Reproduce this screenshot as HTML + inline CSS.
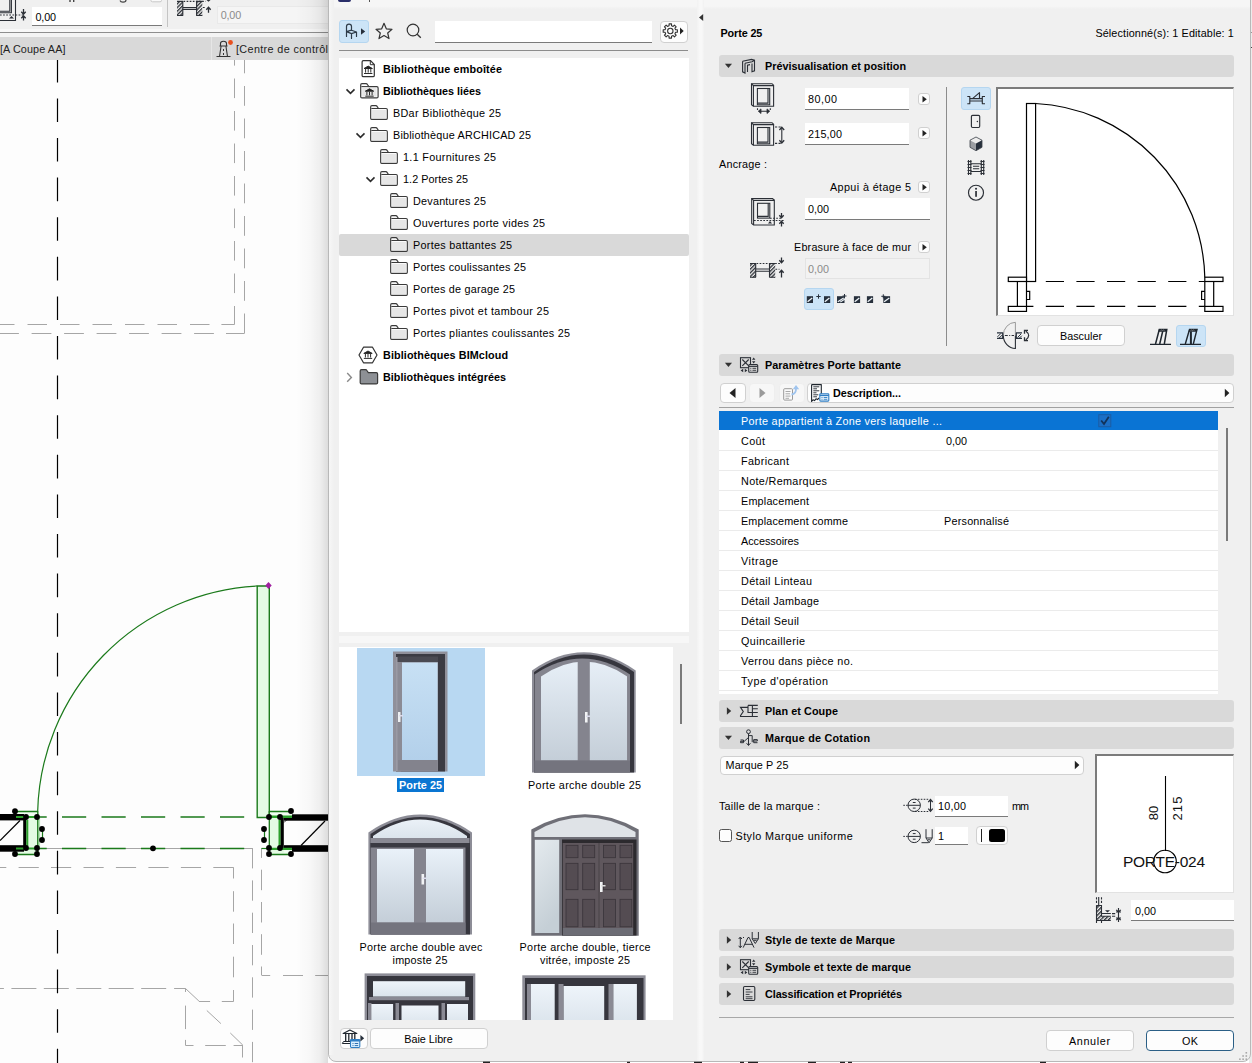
<!DOCTYPE html>
<html><head><meta charset="utf-8">
<style>
*{box-sizing:border-box;margin:0;padding:0}
html,body{width:1252px;height:1063px;overflow:hidden;background:#fff}
body{position:relative;font-family:"Liberation Sans",sans-serif;font-size:12px;color:#000}
.abs{position:absolute}
.t{position:absolute;white-space:nowrap;line-height:16px;height:16px;font-size:10.8px;letter-spacing:0.2px;color:#000}
.b{font-weight:bold}
#bg{position:absolute;left:0;top:0;width:340px;height:1063px;background:#fdfdfd;overflow:hidden}
#dlg{position:absolute;left:328px;top:-10px;width:922.500px;height:1072px;background:#f0f0f0;border:1px solid #b8b8b8;border-radius:8px}
.sec{position:absolute;left:719px;width:515.400px;height:22px;background:#d9d9d9;border-radius:3px}
.inp{position:absolute;background:#fff;border-bottom:1px solid #7a7a7a;height:22px}
.btn{position:absolute;background:#fdfdfd;border:1px solid #d0d0d0;border-radius:4px}
.white{position:absolute;background:#fff}
/*SECTION-CSS*/
</style></head><body>
<!--BG-->
<div id="bg">
<div class="abs" style="left:0;top:0;width:340px;height:32px;background:#f0f0f0"></div>
<div class="abs" style="left:0;top:28.500px;width:340px;height:4px;background:#f8f8f8"></div><div class="abs" style="left:0;top:32.200px;width:340px;height:1.100px;background:#8e8e8e"></div>
<div class="abs" style="left:0;top:33.300px;width:340px;height:4.200px;background:#f4f4f4"></div>
<div class="abs" style="left:0;top:37.400px;width:340px;height:22.400px;background:#d9d9d9"></div>
<div class="abs" style="left:211px;top:37px;width:1px;height:23px;background:#e6e6e6"></div>
<div class="inp" style="left:32px;top:7px;width:130px;height:19px"></div>
<div class="t" style="top:9px;font-size:10.8px;letter-spacing:-0.172px;color:#000;left:35.5px;">0,00</div>

<div class="abs" style="left:167px;top:0;width:1px;height:27px;background:#c4c4c4"></div>
<div class="abs" style="left:217px;top:6px;width:120px;height:17.500px;background:#f5f5f5;border:1px solid #e9e9e9"></div>
<div class="t" style="top:6.800000000000001px;font-size:10.8px;letter-spacing:-0.172px;color:#8a8a8a;left:220.7px;">0,00</div>

<div class="t" style="top:41px;font-size:10.8px;letter-spacing:0.115px;color:#222;left:0px;">[A Coupe AA]</div>

<div class="t" style="top:41px;font-size:10.8px;letter-spacing:0.363px;color:#222;left:236px;">[Centre de contrôl</div>

<svg class="abs" style="left:0;top:0" width="340" height="1063" viewBox="0 0 340 1063">
<!-- toolbar icons -->
<g fill="none" stroke="#2b2f36" stroke-width="1.100">
<path d="M0 11.300H9.800V0M0 12.800H11.400V0M15.500 0V20.500H0"/>
<path d="M0 15H23" stroke-dasharray="1.700 1.400"/>
<path d="M23.500 9V14M21.300 11.800L23.500 14.200L25.700 11.800M23.500 20.500V16M21.300 18.200L23.500 15.800L25.700 18.200" stroke-width="1.300"/>
</g>
<path d="M9 18.600L11.500 15.900L14 18.600Z" fill="#2b2f36"/>
<defs><pattern id="hz0" width="2.600" height="2.600" patternUnits="userSpaceOnUse" patternTransform="rotate(-45)"><rect width="2.600" height="1.300" fill="#2b2f36"/></pattern></defs>
<rect x="177" y="1.200" width="6" height="14.500" fill="url(#hz0)"/><rect x="196.300" y="1.200" width="6" height="14.500" fill="url(#hz0)"/>
<g fill="none" stroke="#2b2f36" stroke-width="1.100">
<path d="M177 1.400H183M177 15.500H183M196.300 1.400H202.300M196.300 15.500H202.300M182.800 1.200V15.700M196.600 1.200V15.700M182.800 7.600H196.600M182.800 9.500H196.600"/>
<path d="M183.500 1.400H205.500M203 7.500H205.500" stroke-dasharray="1.700 1.400"/>
<path d="M208.500 12.700V7.500M206.300 9.800L208.500 7.300L210.700 9.800" stroke-width="1.300"/>
</g>
<path d="M206.500 0H210.500L208.500 1.800Z" fill="#2b2f36"/>
<!-- cropped text bits at top -->
<g fill="#444"><rect x="69.300" y="0" width="1.400" height="2"/><rect x="73" y="0" width="1.400" height="2"/></g>
<path d="M120 0.500Q120.500 2.200 123 2.200Q126 2.200 126 0" fill="none" stroke="#444" stroke-width="1.200"/>
<path d="M151 0V0.500Q151 1.800 152.500 1.800H160Q161.500 1.800 161.500 0.500V0" fill="#fafafa" stroke="#c8c8c8" stroke-width="1"/>
<!-- lighthouse -->
<g fill="none" stroke="#333" stroke-width="1.1">
<path d="M219.500 56.500l1.600-10.500h4.800l1.600 10.500M216.500 56.500h14M219.500 46h8M220.500 46v-2.500c0-3 6-3 6 0v2.500"/>
<path d="M223.500 49v2M223.500 53v2" stroke-width="1"/>
</g>
<circle cx="230.500" cy="42.500" r="2.400" fill="#e8501e"/>
<path d="M234.5 60.0V65.6M234.5 78.5V98.1M234.5 111.0V130.6M234.5 143.5V163.1M234.5 176.0V195.6M234.5 208.5V228.1M234.5 241.0V260.6M234.5 273.5V293.1M234.5 306.0V324.5M0.0 324.5H14.5M27.5 324.5H47.0M60.0 324.5H79.5M92.5 324.5H112.0M125.0 324.5H144.5M157.5 324.5H177.0M190.0 324.5H209.5M221.4 324.5H234.5M244.5 60.0V73.3M244.5 86.0V105.8M244.5 118.5V138.3M244.5 151.0V170.8M244.5 183.5V203.3M244.5 216.0V235.8M244.5 248.5V268.3M244.5 281.0V300.8M244.5 313.5V333.3M0.0 333.5H18.9M31.6 333.5H51.4M64.1 333.5H83.9M96.6 333.5H116.4M129.1 333.5H148.9M161.6 333.5H181.4M194.1 333.5H213.9M226.0 333.5H244.5M46 848.500H252.500M252.5 848.1V868.4M252.5 880.4V900.7M252.5 912.7V933.0M252.5 945.0V965.3M252.5 977.3V997.6M252.5 1009.6V1029.9M252.5 1041.9V1062.2M261.5 848.2V857.9M261.5 869.7V890.2M261.5 902.0V922.5M261.5 934.2V954.8M261.5 966.5V975.0M261.5 975.5H270.2M283.0 975.5H303.0M315.2 975.5H335.0M0.0 867.5H6.3M18.6 867.5H38.8M51.0 867.5H71.2M83.5 867.5H103.7M115.9 867.5H136.1M148.4 867.5H168.6M180.9 867.5H201.1M213.3 867.5H233.5M233.5 867.3V878.5M233.5 891.2V911.7M233.5 923.5V944.0M233.5 956.7V977.3M233.5 990.0V1001.5M221.8 1001.5H233.6M199.0 1001.5H210.1M0.0 988.5H3.9M11.4 988.5H36.4M43.8 988.5H68.8M76.3 988.5H101.3M108.7 988.5H133.7M141.2 988.5H166.2M174.1 988.5H185.7M185.6 988.6L198.950 1001.100M206.800 1010.500L220.900 1023.600M230.300 1033L242.800 1045.100M185.5 988.6V992.0M185.5 1005.6V1029.1M185.5 1039.9V1045.5M185.6 1045.5H193.5M205.2 1045.5H225.8M233.6 1045.5H242.8M242.5 1045.1V1057.5" fill="none" stroke="#a6a6a6" stroke-width="1"/><path d="M57.5 60.0V82.4M57.5 98.4V122.0M57.5 138.0V161.6M57.5 177.6V201.2M57.5 217.2V240.8M57.5 256.8V280.4M57.5 296.4V320.0M57.5 336.0V359.6M57.5 375.6V399.2M57.5 415.2V438.8M57.5 454.8V478.4M57.5 494.4V518.0M57.5 534.0V557.6M57.5 573.6V597.2M57.5 613.2V636.8M57.5 652.8V676.4M57.5 692.4V716.0M57.5 732.0V755.6M57.5 771.6V795.2M57.5 811.2V834.8M57.5 850.8V874.4M57.5 890.4V914.0M57.5 930.0V953.6M57.5 969.6V993.2M57.5 1009.2V1032.8M57.5 1048.8V1063.0" fill="none" stroke="#000" stroke-width="1.200"/>
<!-- door leaf & arc -->
<g fill="none" stroke="#1b7a1b" stroke-width="1.200">
<path d="M257.200 586A231.300 231.300 0 0 0 37.700 811V854"/>
<rect x="257.200" y="586" width="12.100" height="231" fill="#e3fbe3" stroke="none"/>
<path d="M257.200 817.500V586H269.300V817.500Z" stroke-width="1.400"/>
</g>
<!-- green dashed sill lines -->
<g fill="none" stroke="#1b7a1b" stroke-width="1.300">
<path d="M22.500 817H245" stroke-dasharray="24.200 15.300"/>
<path d="M22.500 848.500H245" stroke-dasharray="24.200 15.300"/>

</g>
<!-- left jamb -->
<g>
<rect x="27" y="818" width="11" height="30" fill="#e3fbe3"/>
<rect x="16" y="849" width="22" height="5" fill="#e3fbe3"/>
<rect x="16" y="811.500" width="22" height="5" fill="#f1fdf1"/>
<rect x="0" y="814" width="24" height="6.400" fill="#000"/>
<rect x="0" y="845.200" width="24" height="6.500" fill="#000"/>
<rect x="23.200" y="816" width="3.200" height="34" fill="#000"/>
<path d="M0 840.500L20 820.500" stroke="#000" stroke-width="1.200" fill="none"/>
<path d="M27.300 820V846" stroke="#2ca02c" stroke-width="2"/>
<path d="M16 817H38M16 848.500H38" stroke="#2ca02c" stroke-width="2"/>
<path d="M15 811.500H38M15 854.500H38" stroke="#1b7a1b" stroke-width="1.300" fill="none"/>
<path d="M39.300 818V848" stroke="#b5e8b5" stroke-width="1.600"/><path d="M37.700 811V854" stroke="#1b7a1b" stroke-width="1.200"/>
<path d="M42.500 829V840" stroke="#1b7a1b" stroke-width="1.200"/>
<g fill="#000">
<circle cx="15" cy="811.200" r="2.900"/><circle cx="26" cy="817" r="2.900"/><circle cx="37" cy="817" r="2.900"/>
<circle cx="42" cy="829" r="2.900"/><circle cx="42" cy="840" r="2.900"/>
<circle cx="26" cy="848" r="2.900"/><circle cx="37" cy="848" r="2.900"/>
<circle cx="15" cy="854" r="2.900"/><circle cx="37" cy="854" r="2.900"/>
</g>
</g>
<!-- right jamb -->
<g>
<rect x="269.500" y="818" width="10" height="30" fill="#e3fbe3"/>
<rect x="269.500" y="849" width="21" height="5" fill="#e3fbe3"/>
<rect x="269.500" y="811.500" width="21" height="5" fill="#f1fdf1"/>
<rect x="284" y="814.300" width="56" height="6.400" fill="#000"/>
<rect x="284" y="845.200" width="56" height="6.600" fill="#000"/>
<rect x="280.300" y="816" width="3.500" height="34" fill="#000"/>
<path d="M301 845.500L325 821" stroke="#000" stroke-width="1.200" fill="none"/>
<path d="M284 822.500l2.500-2.500" stroke="#000" stroke-width="0.800"/>
<path d="M279.500 820V846" stroke="#2ca02c" stroke-width="2"/>
<rect x="284" y="813.500" width="8" height="2.500" fill="#f1fdf1"/><rect x="284" y="850" width="8" height="2.500" fill="#f1fdf1"/><path d="M269 816.700H292M269 848.900H292" stroke="#2ca02c" stroke-width="2.400"/>
<path d="M269.300 811.500H291M269.300 854.500H291M269.300 811V854" stroke="#1b7a1b" stroke-width="1.300" fill="none"/>
<path d="M264.500 829V840" stroke="#1b7a1b" stroke-width="1.200"/>
<path d="M261.500 848.500H269" stroke="#1b7a1b" stroke-width="1.200"/>
<g fill="#000">
<circle cx="291" cy="811" r="2.900"/><circle cx="269" cy="817" r="2.900"/><circle cx="280" cy="817" r="2.900"/>
<circle cx="264" cy="829" r="2.900"/><circle cx="264" cy="840" r="2.900"/>
<circle cx="269" cy="848" r="2.900"/><circle cx="280" cy="848" r="2.900"/>
<circle cx="269" cy="854" r="2.900"/><circle cx="291" cy="854" r="2.900"/>
</g>
</g>
<circle cx="153" cy="848.300" r="2.900" fill="#000"/>
<path d="M268.500 582l3.200 3.500-3.200 3.500-3.200-3.500z" fill="#a020a0"/>

</svg>
</div>

<!--RIGHTSTRIP--><div class="abs" style="left:1249px;top:0;width:3px;height:1063px;background:#ececec"></div><div class="abs" style="left:1250px;top:32px;width:2px;height:1px;background:#999"></div><div class="abs" style="left:1250px;top:46.500px;width:2px;height:1.500px;background:#444"></div>
<!--SHADOW-->
<div class="abs" style="left:296px;top:0;width:32px;height:1063px;background:linear-gradient(to right,rgba(0,0,0,0),rgba(0,0,0,0.025) 45%,rgba(0,0,0,0.06) 75%,rgba(0,0,0,0.13))"></div>
<div id="dlg"></div>
<div class="abs" style="left:329px;top:0;width:921px;height:9px;background:linear-gradient(#f6f6f6,#f6f6f6 70%,#f0f0f0)"></div><div class="abs" style="left:329px;top:0;width:5px;height:1055px;background:linear-gradient(to right,#f7f7f7,#f0f0f0)"></div><div class="abs" style="left:338px;top:0;width:13px;height:1.500px;background:#2a2f6a;border-radius:0 0 3px 3px"></div><div class="abs" style="left:369px;top:0;width:1px;height:2px;background:#555"></div>
<div class="abs" style="left:339px;top:20px;width:30px;height:23px;background:#cce4f7;border:1px solid #b5d6f0;border-radius:3px"></div>
<svg class="abs" style="left:339px;top:20px" width="30" height="23" viewBox="339 20 30 23"><path d="M346.500 36.500V26.500Q346.500 24.200 349 24.200Q351.500 24.200 351.500 26.500V30.300M346.500 31.600L351.500 30.200L356.500 32L351.500 33.600ZM351.500 33.600V38.500M356.500 32V36.500" fill="none" stroke="#2e3b48" stroke-width="1.200" stroke-linecap="round" stroke-linejoin="round"/><path d="M361 28.300L365.200 31.500L361 34.700Z" fill="#27303c"/></svg>
<svg class="abs" style="left:374px;top:21px" width="20" height="20" viewBox="0 0 20 20"><path d="M10 2.300L12.300 7.800L18 8.300L13.700 12L15 17.600L10 14.600L5 17.600L6.300 12L2 8.300L7.700 7.800Z" fill="none" stroke="#333" stroke-width="1.200" stroke-linejoin="round"/></svg>
<svg class="abs" style="left:404px;top:21px" width="20" height="20" viewBox="0 0 20 20"><circle cx="9" cy="9" r="5.800" fill="none" stroke="#333" stroke-width="1.200"/><path d="M13.200 13.200L16.800 16.800" stroke="#333" stroke-width="1.300"/></svg>
<div class="inp" style="left:435px;top:21px;width:217px;height:22px"></div>
<div class="btn" style="left:660px;top:21px;width:28px;height:22px"></div>
<svg class="abs" style="left:659.800px;top:21.300px" width="28" height="20" viewBox="0 0 28 20"><g transform="translate(10.300 10)"><path d="M7.10 -1.22L7.10 1.22L5.26 1.23L4.59 2.85L5.88 4.16L4.16 5.88L2.85 4.59L1.23 5.26L1.22 7.10L-1.22 7.10L-1.23 5.26L-2.85 4.59L-4.16 5.88L-5.88 4.16L-4.59 2.85L-5.26 1.23L-7.10 1.22L-7.10 -1.22L-5.26 -1.23L-4.59 -2.85L-5.88 -4.16L-4.16 -5.88L-2.85 -4.59L-1.23 -5.26L-1.22 -7.10L1.22 -7.10L1.23 -5.26L2.85 -4.59L4.16 -5.88L5.88 -4.16L4.59 -2.85L5.26 -1.23Z" fill="none" stroke="#333" stroke-width="1.100" stroke-linejoin="round"/><circle r="2.700" fill="none" stroke="#333" stroke-width="1.100"/></g><path d="M20 6.500L23.700 10L20 13.500Z" fill="#222"/></svg>
<div class="abs" style="left:339px;top:50px;width:349px;height:1px;background:#8c8c8c"></div>
<div class="white" style="left:339px;top:58px;width:350px;height:574px"></div>
<div class="abs" style="left:339px;top:234px;width:350px;height:22px;background:#d9d9d9;border-radius:2px"></div>
<svg class="abs" style="left:361px;top:59px" width="15" height="19" viewBox="0 0 15 19"><path d="M2.400 1.700H9.500L13.300 5.500V16.400Q13.300 17.700 12 17.700H2.400Q1.100 17.700 1.100 16.400V3Q1.100 1.700 2.400 1.700Z" fill="#fff" stroke="#333" stroke-width="1.200"/><path d="M9.300 1.900V5.700H13.100" fill="none" stroke="#333" stroke-width="1"/><path d="M3 9.5l4.200-2.400 4.200 2.400z M3 14.5h8.400 M4.6 10.0v3.600 M7.2 10.0v3.600 M9.8 10.0v3.600" fill="#222" stroke="#222" stroke-width="0.950" stroke-linejoin="round"/></svg>
<div class="t" style="top:61px;font-size:10.8px;letter-spacing:0.161px;color:#000;left:383px;font-weight:bold;">Bibliothèque emboîtée</div>
<svg class="abs" style="left:345px;top:88px" width="11" height="7" viewBox="0 0 11 7"><path d="M1.500 1.400L5.500 5.300L9.500 1.400" fill="none" stroke="#2b2b2b" stroke-width="1.600"/></svg>
<svg class="abs" style="left:360px;top:83px" width="19" height="16" viewBox="0 0 19 16"><path d="M0.700 13.700V2Q0.700 0.700 2 0.700H6Q7 0.700 7.600 1.700L8.800 3.600H16.800Q18.100 3.600 18.100 4.900V13.700Q18.100 14.900 16.800 14.900H2Q0.700 14.900 0.700 13.700Z" fill="#fff" stroke="#3a3a3a" stroke-width="1.200"/><path d="M1.400 3.600H8.500" stroke="#3a3a3a" stroke-width="1.100"/><rect x="2.200" y="5" width="14.400" height="8.600" fill="#e6e6e6"/><path d="M5.3 8.2l4.200-2.400 4.200 2.400z M5.3 13.2h8.400 M6.9 8.7v3.600 M9.5 8.7v3.600 M12.1 8.7v3.600" fill="#222" stroke="#222" stroke-width="0.950" stroke-linejoin="round"/></svg>
<div class="t" style="top:83px;font-size:10.8px;letter-spacing:-0.023px;color:#000;left:383px;font-weight:bold;">Bibliothèques liées</div>
<svg class="abs" style="left:369.5px;top:104.5px" width="18.200" height="15.500" viewBox="0 0 19 16" preserveAspectRatio="none"><path d="M0.700 13.700V2Q0.700 0.700 2 0.700H6Q7 0.700 7.600 1.700L8.800 3.600H16.800Q18.100 3.600 18.100 4.900V13.700Q18.100 14.900 16.800 14.900H2Q0.700 14.900 0.700 13.700Z" fill="#fff" stroke="#3a3a3a" stroke-width="1.200"/><path d="M1.400 3.600H8.500" stroke="#3a3a3a" stroke-width="1.100"/><rect x="2.200" y="5" width="14.400" height="8.600" fill="#e6e6e6"/></svg>
<div class="t" style="top:105px;font-size:10.8px;letter-spacing:0.313px;color:#000;left:393px;">BDar Bibliothèque 25</div>
<svg class="abs" style="left:369.5px;top:126.5px" width="18.200" height="15.500" viewBox="0 0 19 16" preserveAspectRatio="none"><path d="M0.700 13.700V2Q0.700 0.700 2 0.700H6Q7 0.700 7.600 1.700L8.800 3.600H16.800Q18.100 3.600 18.100 4.900V13.700Q18.100 14.900 16.800 14.900H2Q0.700 14.900 0.700 13.700Z" fill="#fff" stroke="#3a3a3a" stroke-width="1.200"/><path d="M1.400 3.600H8.500" stroke="#3a3a3a" stroke-width="1.100"/><rect x="2.200" y="5" width="14.400" height="8.600" fill="#e6e6e6"/></svg>
<svg class="abs" style="left:355px;top:132px" width="11" height="7" viewBox="0 0 11 7"><path d="M1.500 1.400L5.500 5.300L9.500 1.400" fill="none" stroke="#2b2b2b" stroke-width="1.600"/></svg>
<div class="t" style="top:127px;font-size:10.8px;letter-spacing:0.207px;color:#000;left:393px;">Bibliothèque ARCHICAD 25</div>
<svg class="abs" style="left:379.5px;top:148.5px" width="18.200" height="15.500" viewBox="0 0 19 16" preserveAspectRatio="none"><path d="M0.700 13.700V2Q0.700 0.700 2 0.700H6Q7 0.700 7.600 1.700L8.800 3.600H16.800Q18.100 3.600 18.100 4.900V13.700Q18.100 14.900 16.800 14.900H2Q0.700 14.900 0.700 13.700Z" fill="#fff" stroke="#3a3a3a" stroke-width="1.200"/><path d="M1.400 3.600H8.500" stroke="#3a3a3a" stroke-width="1.100"/><rect x="2.200" y="5" width="14.400" height="8.600" fill="#e6e6e6"/></svg>
<div class="t" style="top:149px;font-size:10.8px;letter-spacing:0.316px;color:#000;left:403px;">1.1 Fournitures 25</div>
<svg class="abs" style="left:379.5px;top:170.5px" width="18.200" height="15.500" viewBox="0 0 19 16" preserveAspectRatio="none"><path d="M0.700 13.700V2Q0.700 0.700 2 0.700H6Q7 0.700 7.600 1.700L8.800 3.600H16.800Q18.100 3.600 18.100 4.900V13.700Q18.100 14.900 16.800 14.900H2Q0.700 14.900 0.700 13.700Z" fill="#fff" stroke="#3a3a3a" stroke-width="1.200"/><path d="M1.400 3.600H8.500" stroke="#3a3a3a" stroke-width="1.100"/><rect x="2.200" y="5" width="14.400" height="8.600" fill="#e6e6e6"/></svg>
<svg class="abs" style="left:365px;top:176px" width="11" height="7" viewBox="0 0 11 7"><path d="M1.500 1.400L5.500 5.300L9.500 1.400" fill="none" stroke="#2b2b2b" stroke-width="1.600"/></svg>
<div class="t" style="top:171px;font-size:10.8px;letter-spacing:0.064px;color:#000;left:403px;">1.2 Portes 25</div>
<svg class="abs" style="left:389.5px;top:192.5px" width="18.200" height="15.500" viewBox="0 0 19 16" preserveAspectRatio="none"><path d="M0.700 13.700V2Q0.700 0.700 2 0.700H6Q7 0.700 7.600 1.700L8.800 3.600H16.800Q18.100 3.600 18.100 4.900V13.700Q18.100 14.900 16.800 14.900H2Q0.700 14.900 0.700 13.700Z" fill="#fff" stroke="#3a3a3a" stroke-width="1.200"/><path d="M1.400 3.600H8.500" stroke="#3a3a3a" stroke-width="1.100"/><rect x="2.200" y="5" width="14.400" height="8.600" fill="#e6e6e6"/></svg>
<div class="t" style="top:193px;font-size:10.8px;letter-spacing:0.230px;color:#000;left:413px;">Devantures 25</div>
<svg class="abs" style="left:389.5px;top:214.5px" width="18.200" height="15.500" viewBox="0 0 19 16" preserveAspectRatio="none"><path d="M0.700 13.700V2Q0.700 0.700 2 0.700H6Q7 0.700 7.600 1.700L8.800 3.600H16.800Q18.100 3.600 18.100 4.900V13.700Q18.100 14.900 16.800 14.900H2Q0.700 14.900 0.700 13.700Z" fill="#fff" stroke="#3a3a3a" stroke-width="1.200"/><path d="M1.400 3.600H8.500" stroke="#3a3a3a" stroke-width="1.100"/><rect x="2.200" y="5" width="14.400" height="8.600" fill="#e6e6e6"/></svg>
<div class="t" style="top:215px;font-size:10.8px;letter-spacing:0.324px;color:#000;left:413px;">Ouvertures porte vides 25</div>
<svg class="abs" style="left:389.5px;top:236.5px" width="18.200" height="15.500" viewBox="0 0 19 16" preserveAspectRatio="none"><path d="M0.700 13.700V2Q0.700 0.700 2 0.700H6Q7 0.700 7.600 1.700L8.800 3.600H16.800Q18.100 3.600 18.100 4.900V13.700Q18.100 14.900 16.800 14.900H2Q0.700 14.900 0.700 13.700Z" fill="#fff" stroke="#3a3a3a" stroke-width="1.200"/><path d="M1.400 3.600H8.500" stroke="#3a3a3a" stroke-width="1.100"/><rect x="2.200" y="5" width="14.400" height="8.600" fill="#e6e6e6"/></svg>
<div class="t" style="top:237px;font-size:10.8px;letter-spacing:0.298px;color:#000;left:413px;">Portes battantes 25</div>
<svg class="abs" style="left:389.5px;top:258.5px" width="18.200" height="15.500" viewBox="0 0 19 16" preserveAspectRatio="none"><path d="M0.700 13.700V2Q0.700 0.700 2 0.700H6Q7 0.700 7.600 1.700L8.800 3.600H16.800Q18.100 3.600 18.100 4.900V13.700Q18.100 14.900 16.800 14.900H2Q0.700 14.900 0.700 13.700Z" fill="#fff" stroke="#3a3a3a" stroke-width="1.200"/><path d="M1.400 3.600H8.500" stroke="#3a3a3a" stroke-width="1.100"/><rect x="2.200" y="5" width="14.400" height="8.600" fill="#e6e6e6"/></svg>
<div class="t" style="top:259px;font-size:10.8px;letter-spacing:0.208px;color:#000;left:413px;">Portes coulissantes 25</div>
<svg class="abs" style="left:389.5px;top:280.5px" width="18.200" height="15.500" viewBox="0 0 19 16" preserveAspectRatio="none"><path d="M0.700 13.700V2Q0.700 0.700 2 0.700H6Q7 0.700 7.600 1.700L8.800 3.600H16.800Q18.100 3.600 18.100 4.900V13.700Q18.100 14.900 16.800 14.900H2Q0.700 14.900 0.700 13.700Z" fill="#fff" stroke="#3a3a3a" stroke-width="1.200"/><path d="M1.400 3.600H8.500" stroke="#3a3a3a" stroke-width="1.100"/><rect x="2.200" y="5" width="14.400" height="8.600" fill="#e6e6e6"/></svg>
<div class="t" style="top:281px;font-size:10.8px;letter-spacing:0.231px;color:#000;left:413px;">Portes de garage 25</div>
<svg class="abs" style="left:389.5px;top:302.5px" width="18.200" height="15.500" viewBox="0 0 19 16" preserveAspectRatio="none"><path d="M0.700 13.700V2Q0.700 0.700 2 0.700H6Q7 0.700 7.600 1.700L8.800 3.600H16.800Q18.100 3.600 18.100 4.900V13.700Q18.100 14.900 16.800 14.900H2Q0.700 14.900 0.700 13.700Z" fill="#fff" stroke="#3a3a3a" stroke-width="1.200"/><path d="M1.400 3.600H8.500" stroke="#3a3a3a" stroke-width="1.100"/><rect x="2.200" y="5" width="14.400" height="8.600" fill="#e6e6e6"/></svg>
<div class="t" style="top:303px;font-size:10.8px;letter-spacing:0.374px;color:#000;left:413px;">Portes pivot et tambour 25</div>
<svg class="abs" style="left:389.5px;top:324.5px" width="18.200" height="15.500" viewBox="0 0 19 16" preserveAspectRatio="none"><path d="M0.700 13.700V2Q0.700 0.700 2 0.700H6Q7 0.700 7.600 1.700L8.800 3.600H16.800Q18.100 3.600 18.100 4.900V13.700Q18.100 14.900 16.800 14.900H2Q0.700 14.900 0.700 13.700Z" fill="#fff" stroke="#3a3a3a" stroke-width="1.200"/><path d="M1.400 3.600H8.500" stroke="#3a3a3a" stroke-width="1.100"/><rect x="2.200" y="5" width="14.400" height="8.600" fill="#e6e6e6"/></svg>
<div class="t" style="top:325px;font-size:10.8px;letter-spacing:0.272px;color:#000;left:413px;">Portes pliantes coulissantes 25</div>
<svg class="abs" style="left:358px;top:346px" width="20" height="18" viewBox="0 0 20 18"><path d="M5.500 1.200H14.500L19 9L14.500 16.800H5.500L1 9Z" fill="#fff" stroke="#333" stroke-width="1.200" stroke-linejoin="round"/><path d="M5.8 7.4l4.200-2.400 4.200 2.400z M5.8 12.4h8.400 M7.4 7.9v3.600 M10.0 7.9v3.600 M12.6 7.9v3.600" fill="#222" stroke="#222" stroke-width="0.950" stroke-linejoin="round"/></svg>
<div class="t" style="top:347px;font-size:10.8px;letter-spacing:0.097px;color:#000;left:383px;font-weight:bold;">Bibliothèques BIMcloud</div>
<svg class="abs" style="left:346px;top:372px" width="7" height="11" viewBox="0 0 7 11"><path d="M1.200 1L5.400 5.400L1.200 9.800" fill="none" stroke="#8a8a8a" stroke-width="1.400"/></svg>
<svg class="abs" style="left:359px;top:369px" width="20" height="16" viewBox="0 0 19 16"><path d="M0.700 13.700V2Q0.700 0.700 2 0.700H6Q7 0.700 7.600 1.700L8.800 3.600H16.800Q18.100 3.600 18.100 4.900V13.700Q18.100 14.900 16.800 14.900H2Q0.700 14.900 0.700 13.700Z" fill="#8d9095" stroke="#3a3a3a" stroke-width="1.200"/></svg>
<div class="t" style="top:369px;font-size:10.8px;letter-spacing:0.028px;color:#000;left:383px;font-weight:bold;">Bibliothèques intégrées</div>
<div class="white" style="left:339px;top:647px;width:334px;height:373px;overflow:hidden">
<svg class="abs" style="left:0;top:0" width="334" height="373" viewBox="339 647 334 373">
<defs>
<linearGradient id="gl" x1="0" y1="0" x2="0" y2="1"><stop offset="0" stop-color="#e9f1f9"/><stop offset="0.5" stop-color="#d6dfe8"/><stop offset="1" stop-color="#c4ced8"/></linearGradient>
<linearGradient id="gl2" x1="0" y1="0" x2="0" y2="1"><stop offset="0" stop-color="#c7e0f4"/><stop offset="1" stop-color="#b3d0ea"/></linearGradient>
<linearGradient id="gl3" x1="0" y1="0" x2="0.3" y2="1"><stop offset="0" stop-color="#e4eaee"/><stop offset="1" stop-color="#c5cfd6"/></linearGradient>
<linearGradient id="gl4" x1="0" y1="0" x2="0" y2="1"><stop offset="0" stop-color="#eef4fa"/><stop offset="1" stop-color="#dbe4ec"/></linearGradient>
</defs>
<rect x="357" y="648" width="128" height="128" fill="#b8d8f2"/>
<rect x="393" y="651.500" width="54.500" height="120" fill="#90909a"/>
<rect x="396" y="654" width="49" height="117.500" fill="#3b3b43"/>
<rect x="396" y="657" width="5" height="114.500" fill="#9a9aa4"/>
<rect x="397.500" y="661.500" width="40.500" height="110" fill="#8b8b95"/>
<rect x="397.500" y="656.500" width="40.500" height="5.500" fill="#4a4a52"/>
<rect x="402" y="662.500" width="35.600" height="97.500" fill="url(#gl2)"/>
<rect x="398" y="760" width="39.500" height="10.500" fill="#83838d"/>
<rect x="398" y="712" width="2.500" height="10" fill="#eef0f2"/><rect x="399" y="715" width="4" height="1.500" fill="#dde"/>
<path d="M532 772.4V670.5Q583.85 634.0999999999999 635.7 670.5V772.4Z" fill="#8d8d97"/>
<path d="M534 772.4V672Q584.0 637.0 634 672V772.4Z" fill="#36363e"/>
<path d="M534.5 772.4V674.5Q582.25 642.5 630 674.5V772.4Z" fill="#84848e"/>
<clipPath id="c2"><path d="M541 760.4V676.5Q584.1 646.5 627.2 676.5V760.4Z"/></clipPath>
<g clip-path="url(#c2)"><rect x="541" y="655" width="36.700" height="106" fill="url(#gl)"/><rect x="589.800" y="655" width="37.400" height="106" fill="url(#gl)"/></g>
<rect x="534.500" y="760.400" width="95.500" height="12" fill="#74747e"/>
<rect x="585" y="712" width="2.600" height="10.500" fill="#f2f3f5"/><rect x="586" y="715.500" width="4" height="1.500" fill="#dde"/>
<path d="M368.4 934.4V832.5Q420.2 796.7 472 832.5V934.4Z" fill="#8d8d97"/>
<path d="M370.5 934.4V834Q420.25 800 470 834V934.4Z" fill="#36363e"/>
<clipPath id="c3"><path d="M373 838V836Q420.0 803.0 467 836V838Z"/></clipPath>
<g clip-path="url(#c3)"><rect x="373" y="815" width="94" height="23" fill="url(#gl4)"/></g>
<rect x="370.500" y="838" width="99" height="5" fill="#8a8a94"/>
<rect x="370.500" y="843" width="99" height="4.500" fill="#3a3a42"/>
<rect x="371" y="847.500" width="94.500" height="87" fill="#84848e"/>
<rect x="377" y="849" width="37" height="73.500" fill="url(#gl)"/><rect x="426" y="849" width="37.200" height="73.500" fill="url(#gl)"/>
<rect x="371" y="922.500" width="94.500" height="12" fill="#74747e"/>
<rect x="421.500" y="874" width="2.600" height="10.500" fill="#f2f3f5"/><rect x="422.500" y="877.500" width="4" height="1.500" fill="#dde"/>
<path d="M531.3 935.8V829.5Q585.0 799.0999999999999 638.7 829.5V935.8Z" fill="#6f6f77"/>
<clipPath id="c4"><path d="M534.5 837V832Q585.0 802.5999999999999 635.5 832V837Z"/></clipPath>
<g clip-path="url(#c4)"><rect x="534" y="815" width="102" height="22" fill="#dfe3e7"/></g>
<rect x="534.800" y="839.800" width="24.400" height="93.200" fill="url(#gl3)"/>
<rect x="562" y="839.500" width="74.500" height="96" fill="#2c2a2e"/>
<rect x="562.700" y="843" width="70.500" height="85" fill="#5f575d"/>
<rect x="566" y="845.3" width="12.0" height="12.4" fill="#544c52" stroke="#39343a" stroke-width="0.800"/><rect x="566" y="863.3" width="12.0" height="26.4" fill="#544c52" stroke="#39343a" stroke-width="0.800"/><rect x="566" y="899.3" width="12.0" height="27.5" fill="#544c52" stroke="#39343a" stroke-width="0.800"/><rect x="582.7" y="845.3" width="12.0" height="12.4" fill="#544c52" stroke="#39343a" stroke-width="0.800"/><rect x="582.7" y="863.3" width="12.0" height="26.4" fill="#544c52" stroke="#39343a" stroke-width="0.800"/><rect x="582.7" y="899.3" width="12.0" height="27.5" fill="#544c52" stroke="#39343a" stroke-width="0.800"/><rect x="603.5" y="845.3" width="12.0" height="12.4" fill="#544c52" stroke="#39343a" stroke-width="0.800"/><rect x="603.5" y="863.3" width="12.0" height="26.4" fill="#544c52" stroke="#39343a" stroke-width="0.800"/><rect x="603.5" y="899.3" width="12.0" height="27.5" fill="#544c52" stroke="#39343a" stroke-width="0.800"/><rect x="620" y="845.3" width="11.8" height="12.4" fill="#544c52" stroke="#39343a" stroke-width="0.800"/><rect x="620" y="863.3" width="11.8" height="26.4" fill="#544c52" stroke="#39343a" stroke-width="0.800"/><rect x="620" y="899.3" width="11.8" height="27.5" fill="#544c52" stroke="#39343a" stroke-width="0.800"/>
<rect x="598.500" y="843" width="1" height="85" fill="#4a4449"/>
<rect x="562.700" y="928" width="70.500" height="7.500" fill="#6c6c74"/>
<rect x="600" y="882" width="2.600" height="10" fill="#f2f3f5"/><rect x="601" y="885" width="4.500" height="1.500" fill="#ddd"/>
<rect x="364.600" y="973.400" width="110.700" height="50" fill="#8d8d97"/>
<rect x="367" y="976" width="106" height="47" fill="#36363e"/>
<rect x="373" y="981.200" width="92.200" height="15.400" fill="url(#gl4)"/>
<rect x="369" y="997" width="100" height="3.200" fill="#8a8a94"/>
<rect x="368" y="1003" width="3.500" height="20" fill="#8a8a94"/><rect x="395.500" y="1003" width="3.500" height="20" fill="#8a8a94"/><rect x="441.500" y="1003" width="3.500" height="20" fill="#8a8a94"/>
<rect x="371.300" y="1004" width="21.800" height="20" fill="url(#gl4)"/><rect x="401.500" y="1005.500" width="37" height="20" fill="url(#gl4)"/><rect x="447" y="1004" width="21" height="20" fill="url(#gl4)"/>
<rect x="522.300" y="975.300" width="123.300" height="50" fill="#8d8d97"/>
<rect x="525" y="978" width="118.500" height="47" fill="#36363e"/>
<rect x="527" y="984" width="4" height="40" fill="#8a8a94"/><rect x="558.500" y="984" width="5" height="40" fill="#8a8a94"/><rect x="608.500" y="984" width="5" height="40" fill="#8a8a94"/>
<rect x="531" y="984" width="23.700" height="40" fill="url(#gl4)"/><rect x="563.600" y="986" width="40.600" height="40" fill="url(#gl4)"/><rect x="613.400" y="984" width="23.500" height="40" fill="url(#gl4)"/>
</svg>
</div>
<div class="abs" style="left:397px;top:778px;width:47px;height:14px;background:#0a76d2"></div>
<div class="t" style="top:777px;font-size:10.8px;letter-spacing:0.056px;color:#fff;left:399px;font-weight:bold;">Porte 25</div>
<div class="t" style="top:777px;font-size:10.8px;letter-spacing:0.338px;color:#000;left:528px;">Porte arche double 25</div>
<div class="t" style="top:939.3px;font-size:10.8px;letter-spacing:0.262px;color:#000;left:359.6px;">Porte arche double avec</div>
<div class="t" style="top:952px;font-size:10.8px;letter-spacing:0.241px;color:#000;left:392.5px;">imposte 25</div>
<div class="t" style="top:939.3px;font-size:10.8px;letter-spacing:0.294px;color:#000;left:519.6px;">Porte arche double, tierce</div>
<div class="t" style="top:952px;font-size:10.8px;letter-spacing:0.281px;color:#000;left:540px;">vitrée, imposte 25</div>
<div class="abs" style="left:680px;top:664px;width:2px;height:60px;background:#7a7a7a"></div>
<div class="abs" style="left:339px;top:636px;width:350px;height:6.500px;background:#f7f7f7"></div>
<div class="btn" style="left:340px;top:1028px;width:28px;height:21px"></div>
<svg class="abs" style="left:340px;top:1028px" width="28" height="22" viewBox="340 1028 28 22"><path d="M343.200 1033.500L349.900 1030L356.800 1033.500Z" fill="none" stroke="#1f262e" stroke-width="1.200" stroke-linejoin="round"/><path d="M345.700 1034V1041.200M348.800 1034V1041.200M352 1034V1041.200M354.800 1034V1041.200" stroke="#1f262e" stroke-width="1.300"/><path d="M343.500 1041.500H352L352 1043.500H342.300Z" fill="#fff" stroke="#1f262e" stroke-width="1" stroke-linejoin="round"/><rect x="350.500" y="1039.500" width="9.300" height="8" rx="0.900" fill="#dbf0ff" stroke="#2f7ec4" stroke-width="1.100"/><path d="M350.500 1040.600H359.800" stroke="#2f7ec4" stroke-width="1.800"/><path d="M352.500 1043.500H353.500M354.700 1043.500H358.200M352.500 1045.600H353.500M354.700 1045.600H358.200" stroke="#2f6fae" stroke-width="1"/><path d="M360.400 1035L364.200 1038.300L360.400 1041.600Z" fill="#27303c"/></svg>
<div class="btn" style="left:370px;top:1028px;width:118px;height:21px"></div>
<div class="t" style="top:1031px;font-size:10.8px;letter-spacing:-0.025px;color:#000;left:404.3px;">Baie Libre</div>

<div class="abs" style="left:696.500px;top:0;width:7.500px;height:1061px;background:linear-gradient(to right,#f2f2f2,#f8f8f8 40%,#f8f8f8 70%,#f1f1f1)"></div>
<svg class="abs" style="left:698px;top:12px" width="6" height="10" viewBox="0 0 6 10"><path d="M5.200 2V9L1 5.500Z" fill="#333"/></svg>
<div class="t" style="top:25px;font-size:10.8px;letter-spacing:-0.116px;color:#000;left:720.5px;font-weight:bold;">Porte 25</div>
<div class="t" style="top:25px;font-size:10.8px;letter-spacing:0.123px;color:#000;left:1095.4px;">Sélectionné(s): 1 Editable: 1</div>
<div class="sec" style="top:55px"></div>
<svg class="abs" style="left:723px;top:63px" width="10" height="6" viewBox="0 0 10 6"><path d="M1.900 0.700H9L5.450 5.100Z" fill="#333"/></svg>
<svg class="abs" style="left:740px;top:57px" width="18" height="18" viewBox="740 57 18 18"><g fill="none" stroke="#2b2f36" stroke-width="1.1"><path d="M742.600 61.300V71.800L745 73V63.300M742.600 61.300L751.500 59.400L754.500 60.200V70.800L752 71.800V63.500M745 63.300L752 61.800L754.500 60.200M747.500 72V65.200L750 64.600"/></g></svg>
<div class="t" style="top:58px;font-size:10.8px;letter-spacing:0.022px;color:#000;left:765px;font-weight:bold;">Prévisualisation et position</div>
<svg class="abs" style="left:748px;top:81px" width="40" height="36" viewBox="748 81 40 36"><g fill="none" stroke="#2b2f36" stroke-width="1.1"><path d="M751.5 83.7H772L773.6 85.2V106.2H753.4L751.5 104.7Z"/><path d="M753.4 106.2V85.60000000000001H773.6"/><path d="M751.5 83.7L753.4 85.60000000000001"/><rect x="757.4" y="88.5" width="12.300" height="16.300"/><path d="M768 88.5V103.1H757.4"/></g><g fill="none" stroke="#2b2f36" stroke-width="1.1"><path d="M759 111.200H769M757.500 108.200V110M770.300 108.200V110" /><path d="M761 108.900L758.300 111.200L761 113.500ZM767 108.900L769.700 111.200L767 113.500Z" fill="#2b2f36" stroke-width="0.800"/></g></svg>
<div class="inp" style="left:805px;top:88px;width:104px;height:22px"></div>
<div class="t" style="top:91px;font-size:10.8px;letter-spacing:0.492px;color:#000;left:808px;">80,00</div>
<div class="btn" style="left:917.5px;top:92.7px;width:12.500px;height:12.500px;border-radius:3px;border-color:#d0d0d0"></div><svg class="abs" style="left:917.5px;top:92.7px" width="12.500" height="12.500" viewBox="0 0 12.500 12.500"><path d="M4.500 3V9.600L8.800 6.300Z" fill="#222"/></svg>
<svg class="abs" style="left:748px;top:120px" width="40" height="30" viewBox="748 120 40 30"><g fill="none" stroke="#2b2f36" stroke-width="1.1"><path d="M751.5 122.7H772L773.6 124.2V145.2H753.4L751.5 143.7Z"/><path d="M753.4 145.2V124.60000000000001H773.6"/><path d="M751.5 122.7L753.4 124.60000000000001"/><rect x="757.4" y="127.5" width="12.300" height="16.300"/><path d="M768 127.5V142.1H757.4"/></g><g fill="none" stroke="#2b2f36" stroke-width="1.1"><path d="M775 127H781M775 143.300H781" stroke-dasharray="2.200 1.300" stroke-width="1.200"/><path d="M781.800 128V142.300"/><path d="M779.400 130L781.800 127.300L784.200 130M779.400 140.300L781.800 143L784.200 140.300" stroke-width="1.300"/></g></svg>
<div class="inp" style="left:805px;top:123px;width:104px;height:22px"></div>
<div class="t" style="top:126px;font-size:10.8px;letter-spacing:0.194px;color:#000;left:808px;">215,00</div>
<div class="btn" style="left:917.5px;top:126.7px;width:12.500px;height:12.500px;border-radius:3px;border-color:#d0d0d0"></div><svg class="abs" style="left:917.5px;top:126.7px" width="12.500" height="12.500" viewBox="0 0 12.500 12.500"><path d="M4.500 3V9.600L8.800 6.300Z" fill="#222"/></svg>
<div class="t" style="top:156px;font-size:10.8px;letter-spacing:0.223px;color:#000;left:719px;">Ancrage :</div>
<div class="t" style="top:179px;font-size:10.8px;letter-spacing:0.382px;color:#000;left:830px;">Appui à étage 5</div>
<div class="btn" style="left:917.5px;top:180.7px;width:12.500px;height:12.500px;border-radius:3px;border-color:#d0d0d0"></div><svg class="abs" style="left:917.5px;top:180.7px" width="12.500" height="12.500" viewBox="0 0 12.500 12.500"><path d="M4.500 3V9.600L8.800 6.300Z" fill="#222"/></svg>
<svg class="abs" style="left:748px;top:195px" width="40" height="34" viewBox="748 195 40 34"><g fill="none" stroke="#2b2f36" stroke-width="1.1"><path d="M751.700 198.500H772.500L774.300 200V225H753.600L751.700 223.500Z"/><path d="M753.600 225V200.400H774.300M751.700 198.500L753.600 200.400"/><rect x="757.500" y="203.300" width="12.300" height="14.800"/><path d="M768.200 203.300V216.400H757.500"/></g><g fill="none" stroke="#2b2f36" stroke-width="1.1"><path d="M754 220.500H784.500M770 218.200H782" stroke-dasharray="1.700 1.400"/></g><path d="M768 223.600L770 220.900L772 223.600Z" fill="#2b2f36"/><g fill="none" stroke="#2b2f36" stroke-width="1.1"><path d="M781.500 213V217.500M779.300 215.300L781.500 217.700L783.700 215.300M781.500 226.500V221.500M779.300 223.700L781.500 221.300L783.700 223.700" stroke-width="1.300"/></g></svg>
<div class="inp" style="left:805px;top:198px;width:125px;height:22px"></div>
<div class="t" style="top:201px;font-size:10.8px;letter-spacing:-0.005px;color:#000;left:808px;">0,00</div>
<div class="t" style="top:239px;font-size:10.8px;letter-spacing:0.199px;color:#000;left:794px;">Ebrasure à face de mur</div>
<div class="btn" style="left:917.5px;top:240.7px;width:12.500px;height:12.500px;border-radius:3px;border-color:#d0d0d0"></div><svg class="abs" style="left:917.5px;top:240.7px" width="12.500" height="12.500" viewBox="0 0 12.500 12.500"><path d="M4.500 3V9.600L8.800 6.300Z" fill="#222"/></svg>
<svg class="abs" style="left:748px;top:255px" width="40" height="26" viewBox="748 255 40 26"><defs><pattern id="hz" width="2.600" height="2.600" patternUnits="userSpaceOnUse" patternTransform="rotate(-45)"><rect width="2.600" height="1.300" fill="#2b2f36"/></pattern></defs><rect x="750" y="263.200" width="6" height="14.400" fill="url(#hz)"/><rect x="769.200" y="263.200" width="6" height="14.400" fill="url(#hz)"/><g fill="none" stroke="#2b2f36" stroke-width="1.1"><path d="M750 263.500H756M750 277.300H756M769.200 263.500H775.200M769.200 277.300H775.200M756 269H769.200M756 271.300H769.200M755.700 263.500V277.300M769.500 263.500V277.300"/></g><g fill="none" stroke="#2b2f36" stroke-width="1.1"><path d="M756.500 263.500H780M775.500 269.200H779.500" stroke-dasharray="1.700 1.400"/></g><g fill="none" stroke="#2b2f36" stroke-width="1.1"><path d="M781.500 257.500V262.500M779.300 260.200L781.500 262.700L783.700 260.200M781.500 277.500V270.500M779.300 272.800L781.500 270.300L783.700 272.800" stroke-width="1.300"/></g></svg>
<div class="abs" style="left:805px;top:258px;width:125px;height:21px;background:#f2f2f2;border:1px solid #e3e3e3"></div>
<div class="t" style="top:261px;font-size:10.8px;letter-spacing:-0.005px;color:#8a8a8a;left:808px;">0,00</div>
<div class="abs" style="left:804px;top:288px;width:30px;height:22px;background:#cce4f7;border:1px solid #b5d6f0;border-radius:3px"></div>
<svg class="abs" style="left:804px;top:290px" width="92" height="18" viewBox="804 290 92 18"><rect x="806.8" y="296.2" width="6.2" height="6.8" fill="#27303c"/><path d="M807.5999999999999 301.7L812.2 298.0" stroke="#eef3f8" stroke-width="1.300"/><path d="M816.3 296.5H820.7M818.5 294.3V298.7" stroke="#27303c" stroke-width="1" fill="none"/><rect x="824" y="296.2" width="6.2" height="6.8" fill="#27303c"/><path d="M824.8 301.7L829.4000000000001 298.0" stroke="#eef3f8" stroke-width="1.300"/><rect x="837" y="296.2" width="7.5" height="6.8" fill="#27303c"/><path d="M837.8 301.7L843.7 298.0" stroke="#eef3f8" stroke-width="1.300"/><path d="M840.3 302.0L845.0 299.0" stroke="#eef3f8" stroke-width="1.100"/><path d="M842.5 296H846.5M844.5 294V298" stroke="#27303c" stroke-width="1" fill="none"/><rect x="853.9" y="296.2" width="6.2" height="6.8" fill="#27303c"/><path d="M854.6999999999999 301.7L859.3000000000001 298.0" stroke="#eef3f8" stroke-width="1.300"/><rect x="866.9" y="296.2" width="6.2" height="6.8" fill="#27303c"/><path d="M867.6999999999999 301.7L872.3000000000001 298.0" stroke="#eef3f8" stroke-width="1.300"/><rect x="883.3" y="296.2" width="6.8" height="6.8" fill="#27303c"/><path d="M884.0999999999999 301.7L889.3 298.0" stroke="#eef3f8" stroke-width="1.300"/><path d="M881.3 296.3H885.3M883.3 294.3V298.3" stroke="#27303c" stroke-width="1" fill="none"/></svg>
<div class="abs" style="left:946px;top:87px;width:1px;height:259px;background:#8c8c8c"></div>
<div class="abs" style="left:961px;top:87px;width:30px;height:23px;background:#cce4f7;border:1px solid #b5d6f0;border-radius:3px"></div>
<svg class="abs" style="left:960px;top:86px" width="32" height="118" viewBox="960 86 32 118"><g fill="none" stroke="#2b2f36" stroke-width="1.15"><path d="M967.300 96.500H970.200M967.300 103.700H970.200M969.800 96.500V103.700M982.300 96.500V103.700M981.900 96.500H985M981.900 103.700H985M969.800 98.600H982.300M969.800 101H982.300M972.500 98.600L979.500 92.600V98.600" stroke-linejoin="round"/></g><g fill="none" stroke="#2b2f36" stroke-width="1.15"><rect x="971.400" y="115.400" width="8.300" height="12.100" rx="1.200"/></g><circle cx="977.400" cy="121.600" r="0.750" fill="#2b2f36"/><path d="M976 137L982 140.200L976 143.600L970 140.200Z" fill="#ececec"/><path d="M970 140.200L976 143.600V150.700L970 147.300Z" fill="#9b9ea3"/><path d="M982 140.200L976 143.600V150.700L982 147.300Z" fill="#27303c"/><path d="M976 137L982 140.200V147.300L976 150.700L970 147.300V140.200Z" fill="none" stroke="#3a3f47" stroke-width="0.800"/><g fill="none" stroke="#2b2f36" stroke-width="1.1"><path d="M968.500 160V175M970.800 160V175M981.300 160V175M983.700 160V175M970.800 163.800H981.300M970.800 171.500H981.300M973 166.200H979.200M973 168.800H979.200"/></g><g fill="none" stroke="#2b2f36" stroke-width="1"><path d="M967.500 161.500H971.500M967.500 164.500H971.500M967.500 167.500H971.500M967.500 170.500H971.500M967.500 173.500H971.500M980.500 161.500H984.500M980.500 164.500H984.500M980.500 167.500H984.500M980.500 170.500H984.500M980.500 173.500H984.500"/></g><g fill="none" stroke="#2b2f36" stroke-width="1.15"><circle cx="976" cy="192.700" r="7.500"/></g><rect x="975.200" y="191" width="1.700" height="5.800" fill="#2b2f36"/><circle cx="976.050" cy="188.700" r="1.050" fill="#2b2f36"/></svg>
<div class="abs" style="left:996px;top:87px;width:238px;height:229px;background:#fff;border-top:2px solid #7b7b7b;border-left:2px solid #7b7b7b;border-right:1px solid #e2e2e2;border-bottom:1px solid #e2e2e2"></div>
<svg class="abs" style="left:998px;top:89px" width="236" height="226" viewBox="998 89 236 226"><g fill="none" stroke="#000" stroke-width="1.200"><path d="M1035.600 103.500A178.200 178.200 0 0 1 1204.800 277.500"/><rect x="1026.500" y="103.500" width="9.100" height="178"/><rect x="1008.300" y="277.200" width="18.200" height="4.300" fill="#fff"/><rect x="1008.300" y="306.400" width="18.200" height="5" fill="#fff"/><path d="M1017.400 281.500V306.400M1026.500 281.500V306.400M1026.500 291.400H1029.700V299.500H1026.500"/><rect x="1204.800" y="277.200" width="18.200" height="4.300" fill="#fff"/><rect x="1204.800" y="306.400" width="18.200" height="5" fill="#fff"/><path d="M1213.700 281.500V306.400M1204.800 281.500V306.400M1204.800 291.400H1201.600V299.500H1204.800"/><path d="M1045.800 281.500H1204.800" stroke-dasharray="18.200 12.400"/><path d="M1026.500 306.400H1204.800" stroke-dasharray="18.200 12.400" stroke-dashoffset="11.300"/></g></svg>
<svg class="abs" style="left:995px;top:320px" width="40" height="32" viewBox="995 320 40 32"><path d="M1015.400 322.300A12.300 13.100 0 0 0 1003.300 335.500" fill="none" stroke="#9a9a9a" stroke-width="1"/><path d="M1015.400 322.300V335.500" stroke="#9a9a9a" stroke-width="1"/><path d="M1003.300 335.500A12.300 13.100 0 0 0 1015.400 348.500V335.500" fill="none" stroke="#2b2f36" stroke-width="1.100"/><path d="M1004.800 335.500H1014" stroke="#2b2f36" stroke-width="1" stroke-dasharray="3 1.400 1 1.400"/><path d="M997 332.800H1003.200M997 338.400H1003.200M1002.700 332.800V338.400" stroke="#27303c" stroke-width="1.200" fill="none"/><path d="M997.500 336.800L1001 333.300M999 338.200L1002.500 334.700" stroke="#27303c" stroke-width="1"/><path d="M1016 332.800H1022M1016 338.400H1022M1016.300 332.800V338.400" stroke="#27303c" stroke-width="1.200" fill="none"/><path d="M1017.500 337.500L1021 334M1019.300 338.200L1021.800 335.700" stroke="#27303c" stroke-width="1"/><g fill="none" stroke="#2b2f36" stroke-width="1.2"><path d="M1025.800 331Q1031.500 335.500 1025.800 340"/><path d="M1024.500 333.800V330.300H1028M1024.500 337.200V340.700H1028" stroke-width="1.300"/></g></svg>
<div class="btn" style="left:1037px;top:325px;width:88px;height:21px"></div>
<div class="t" style="top:328px;font-size:10.8px;letter-spacing:-0.002px;color:#000;left:1060px;">Basculer</div>
<div class="abs" style="left:1176px;top:325px;width:30px;height:22px;background:#cce4f7;border:1px solid #b5d6f0;border-radius:3px"></div>
<svg class="abs" style="left:1148px;top:325px" width="58" height="22" viewBox="1148 325 58 22"><path d="M1150 344.400H1171M1180 344.400H1201" stroke="#1f262e" stroke-width="1.300"/><path d="M1155.500 344L1159.300 329.500H1166.800L1164.300 344M1159.700 344L1163 330" fill="none" stroke="#1f262e" stroke-width="1.500"/><path d="M1159 329H1167L1166.500 331.800H1158.400Z" fill="#1f262e"/><path d="M1160.500 330.600l1-0.600 1 0.600 1-0.600 1 0.600" stroke="#ccc" stroke-width="0.500" fill="none"/><path d="M1185.300 344L1189.500 329.500H1197L1193.300 344" fill="none" stroke="#1f262e" stroke-width="1.400"/><path d="M1189.200 329H1197.300L1196.600 331.800H1188.500Z" fill="#1f262e"/><path d="M1190.900 331.500V344" stroke="#1f262e" stroke-width="2"/><path d="M1190.500 330.600l1-0.600 1 0.600 1-0.600 1 0.600" stroke="#ccc" stroke-width="0.500" fill="none"/></svg>
<div class="sec" style="top:354px"></div>
<svg class="abs" style="left:723px;top:362px" width="10" height="6" viewBox="0 0 10 6"><path d="M1.900 0.700H9L5.450 5.100Z" fill="#333"/></svg>
<svg class="abs" style="left:739px;top:356px" width="21" height="18" viewBox="739 356 21 18"><g fill="none" stroke="#2b2f36" stroke-width="1.1"><rect x="740.500" y="357.700" width="10" height="10"/><path d="M742.300 359.500L748.700 365.900M748.700 359.500L742.300 365.900"/></g><path d="M752 359.800L753.700 357.500L755.400 359.800ZM752 361.200L753.700 363.400L755.400 361.200Z" fill="#2b2f36"/><path d="M743.200 368.800L740.600 370.500L743.200 372.200ZM744.800 368.800L747.400 370.500L744.800 372.200Z" fill="#2b2f36"/><rect x="748.700" y="364.500" width="9" height="7.800" rx="1" fill="#d9d9d9" stroke="#2b2f36" stroke-width="1.100"/><path d="M748.700 366.300H757.700" stroke="#2b2f36" stroke-width="1.200"/><path d="M750.300 368.300H751.300M752.500 368.300H756.200M750.300 370.300H751.300M752.500 370.300H756.200" stroke="#2b2f36" stroke-width="0.900"/></svg>
<div class="t" style="top:357px;font-size:10.8px;letter-spacing:0.066px;color:#000;left:765px;font-weight:bold;">Paramètres Porte battante</div>
<div class="btn" style="left:720px;top:383px;width:26px;height:20px"></div>
<svg class="abs" style="left:720px;top:383px" width="26" height="20" viewBox="0 0 26 20"><path d="M15.500 5V15L9.500 10Z" fill="#222"/></svg>
<div class="btn" style="left:749px;top:383px;width:26px;height:20px;background:#f7f7f7;border-color:#eeeeee"></div>
<svg class="abs" style="left:749px;top:383px" width="26" height="20" viewBox="0 0 26 20"><path d="M10.500 5V15L16.500 10Z" fill="#9a9a9a"/></svg>
<div class="btn" style="left:779px;top:383px;width:26px;height:20px;background:#f7f7f7;border-color:#eeeeee"></div>
<svg class="abs" style="left:781px;top:384px" width="22" height="18" viewBox="781 384 22 18"><rect x="783.700" y="388.700" width="8.800" height="11.400" rx="1" fill="#fafafa" stroke="#9a9a9a" stroke-width="1"/><path d="M785.500 391.500H790.500M785.500 393.800H790M785.500 396.100H790.500M785.500 398.300H789" stroke="#a0a0a0" stroke-width="0.900"/><path d="M791.500 394.500Q796.200 394 796 388.500" fill="none" stroke="#9fc4ee" stroke-width="1.800"/><path d="M792.800 389.300L796 385L799.200 389.300Z" fill="#9fc4ee"/></svg>
<div class="btn" style="left:807px;top:383px;width:427px;height:20px"></div>
<svg class="abs" style="left:810px;top:383px" width="22" height="20" viewBox="810 383 22 20"><path d="M811.600 384.600H821.300V395M811.600 384.600V401.500L813 399.800L814.500 400.600L816 398.800L817.500 399.600L819 398" fill="#fff" stroke="#1f262e" stroke-width="1.100" stroke-linejoin="round"/><path d="M813.300 386.800H819.300M813.300 388.800H817M813.300 390.800H819.300M813.300 392.800H816.500M813.300 394.800H818.300M813.300 396.800H817" stroke="#1f262e" stroke-width="0.900"/><rect x="819.800" y="393.800" width="9" height="7.300" rx="0.800" fill="#eaf3fb" stroke="#2f7ec4" stroke-width="1.100"/><path d="M819.800 395.400H828.800" stroke="#2f7ec4" stroke-width="1.400"/><path d="M821.500 397.500H822.500M823.700 397.500H827.300M821.500 399.300H822.500M823.700 399.300H827.300" stroke="#2f7ec4" stroke-width="0.900"/></svg>
<div class="t" style="top:385px;font-size:10.8px;letter-spacing:-0.031px;color:#000;left:833px;font-weight:bold;">Description...</div>
<svg class="abs" style="left:1224px;top:388px" width="6" height="10" viewBox="0 0 6 10"><path d="M0.800 0.800V9.200L5.400 5Z" fill="#222"/></svg>
<div class="abs" style="left:719px;top:407px;width:515px;height:1px;background:#a0a0a0"></div>
<div class="white" style="left:719px;top:411px;width:499px;height:283px"></div>
<div class="abs" style="left:719px;top:411px;width:499px;height:19px;background:#0a74d4"></div>
<div class="t" style="top:413px;font-size:10.8px;letter-spacing:0.298px;color:#fff;left:741px;">Porte appartient à Zone vers laquelle ...</div>
<div class="t" style="top:433px;font-size:10.8px;letter-spacing:0.396px;color:#000;left:741px;">Coût</div>
<div class="abs" style="left:719px;top:450px;width:499px;height:1px;background:#ebebeb"></div>
<div class="t" style="top:453px;font-size:10.8px;letter-spacing:0.373px;color:#000;left:741px;">Fabricant</div>
<div class="abs" style="left:719px;top:470px;width:499px;height:1px;background:#ebebeb"></div>
<div class="t" style="top:473px;font-size:10.8px;letter-spacing:0.337px;color:#000;left:741px;">Note/Remarques</div>
<div class="abs" style="left:719px;top:490px;width:499px;height:1px;background:#ebebeb"></div>
<div class="t" style="top:493px;font-size:10.8px;letter-spacing:0.198px;color:#000;left:741px;">Emplacement</div>
<div class="abs" style="left:719px;top:510px;width:499px;height:1px;background:#ebebeb"></div>
<div class="t" style="top:513px;font-size:10.8px;letter-spacing:0.162px;color:#000;left:741px;">Emplacement comme</div>
<div class="abs" style="left:719px;top:530px;width:499px;height:1px;background:#ebebeb"></div>
<div class="t" style="top:533px;font-size:10.8px;letter-spacing:-0.020px;color:#000;left:741px;">Accessoires</div>
<div class="abs" style="left:719px;top:550px;width:499px;height:1px;background:#ebebeb"></div>
<div class="t" style="top:553px;font-size:10.8px;letter-spacing:0.497px;color:#000;left:741px;">Vitrage</div>
<div class="abs" style="left:719px;top:570px;width:499px;height:1px;background:#ebebeb"></div>
<div class="t" style="top:573px;font-size:10.8px;letter-spacing:0.382px;color:#000;left:741px;">Détail Linteau</div>
<div class="abs" style="left:719px;top:590px;width:499px;height:1px;background:#ebebeb"></div>
<div class="t" style="top:593px;font-size:10.8px;letter-spacing:0.228px;color:#000;left:741px;">Détail Jambage</div>
<div class="abs" style="left:719px;top:610px;width:499px;height:1px;background:#ebebeb"></div>
<div class="t" style="top:613px;font-size:10.8px;letter-spacing:0.307px;color:#000;left:741px;">Détail Seuil</div>
<div class="abs" style="left:719px;top:630px;width:499px;height:1px;background:#ebebeb"></div>
<div class="t" style="top:633px;font-size:10.8px;letter-spacing:0.382px;color:#000;left:741px;">Quincaillerie</div>
<div class="abs" style="left:719px;top:650px;width:499px;height:1px;background:#ebebeb"></div>
<div class="t" style="top:653px;font-size:10.8px;letter-spacing:0.348px;color:#000;left:741px;">Verrou dans pièce no.</div>
<div class="abs" style="left:719px;top:670px;width:499px;height:1px;background:#ebebeb"></div>
<div class="t" style="top:673px;font-size:10.8px;letter-spacing:0.500px;color:#000;left:741px;">Type d'opération</div>
<div class="abs" style="left:719px;top:690px;width:499px;height:1px;background:#ebebeb"></div>
<div class="t" style="top:433px;font-size:10.8px;letter-spacing:-0.005px;color:#000;left:946px;">0,00</div>
<div class="t" style="top:513px;font-size:10.8px;letter-spacing:0.234px;color:#000;left:944px;">Personnalisé</div>
<svg class="abs" style="left:1098px;top:414px" width="14" height="14" viewBox="0 0 14 14"><rect x="0.800" y="0.700" width="12" height="12" fill="#1c6fc6" stroke="#1b5da3" stroke-width="1"/><path d="M3.200 6.500L6 10L10.800 2.800" fill="none" stroke="#12335a" stroke-width="1.800"/></svg>
<div class="abs" style="left:1226px;top:428px;width:2px;height:113px;background:#7a7a7a"></div>
<div class="sec" style="top:700px"></div>
<svg class="abs" style="left:725px;top:706px" width="7" height="10" viewBox="0 0 7 10"><path d="M1.900 1.300V8.700L6.200 5Z" fill="#333"/></svg>
<svg class="abs" style="left:739px;top:703px" width="21" height="16" viewBox="739 703 21 16"><g fill="none" stroke="#2b2f36" stroke-width="1.1"><path d="M748 707.400H740.500L743.300 711.600L740.500 715.600V716.500H757.800M748 705.400V712.500H757.800M748 705.400H757.800M752.400 705.400V716.500M752.400 708.800H757.800"/></g></svg>
<div class="t" style="top:703px;font-size:10.8px;letter-spacing:0.083px;color:#000;left:765px;font-weight:bold;">Plan et Coupe</div>
<div class="sec" style="top:727px"></div>
<svg class="abs" style="left:723px;top:735px" width="10" height="6" viewBox="0 0 10 6"><path d="M1.900 0.700H9L5.450 5.100Z" fill="#333"/></svg>
<svg class="abs" style="left:739px;top:728px" width="21" height="20" viewBox="739 728 21 20"><g fill="none" stroke="#2b2f36" stroke-width="1"><circle cx="748.500" cy="731.700" r="1.900"/><path d="M748.500 733.600V745M746.600 743.200L748.500 745.500L750.400 743.200"/><path d="M740.500 740H743.500V742.700H740.500V741.300H744.200L748.500 737.500M748.500 735.600H752.200V742.200M753.300 741H757.300V739.600H753.700V742.700H757.500"/></g></svg>
<div class="t" style="top:730px;font-size:10.8px;letter-spacing:0.248px;color:#000;left:765px;font-weight:bold;">Marque de Cotation</div>
<div class="btn" style="left:720px;top:756px;width:364px;height:19px"></div>
<div class="t" style="top:757.3px;font-size:10.8px;letter-spacing:0.138px;color:#000;left:725.5px;">Marque P 25</div>
<svg class="abs" style="left:1074px;top:760px" width="6" height="10" viewBox="0 0 6 10"><path d="M0.800 0.800V9.200L5.400 5Z" fill="#222"/></svg>
<div class="abs" style="left:1095px;top:754px;width:139px;height:139px;background:#fff;border-top:2px solid #7b7b7b;border-left:2px solid #7b7b7b;border-right:1px solid #e2e2e2;border-bottom:1px solid #e2e2e2"></div>
<svg class="abs" style="left:1097px;top:756px" width="137" height="136" viewBox="1097 756 137 136"><path d="M1165.500 776V851" stroke="#000" stroke-width="1.100"/><circle cx="1165" cy="861.500" r="11.300" fill="none" stroke="#000" stroke-width="1.100"/><text x="1164" y="867" font-family="Liberation Sans" font-size="15.500" text-anchor="middle" fill="#111" textLength="82">PORTE-024</text><text transform="translate(1158 820.300) rotate(-90)" font-family="Liberation Sans" font-size="13" fill="#111">80</text><text transform="translate(1181.500 820.500) rotate(-90)" font-family="Liberation Sans" font-size="13" fill="#111" textLength="24">215</text></svg>
<div class="t" style="top:798px;font-size:10.8px;letter-spacing:0.219px;color:#000;left:719px;">Taille de la marque :</div>
<svg class="abs" style="left:902px;top:797px" width="33" height="18" viewBox="902 797 33 18"><g fill="none" stroke="#2b2f36" stroke-width="1"><circle cx="914.200" cy="805.3" r="6.200"/><path d="M908 805.3H920.400"/><path d="M903.300 805.3H908" stroke-dasharray="1.600 1.200"/><path d="M912.800 802.5H915.600M912.800 808.0999999999999H915.600"/><path d="M915 799.300H928.500M915 811.500H928.500" stroke-dasharray="1.600 1.300"/><path d="M930.500 800.300V810.500"/><path d="M928.300 802.200L930.500 799.500L932.700 802.200M928.300 808.600L930.500 811.300L932.700 808.600" stroke-width="1.300"/></g></svg>
<div class="inp" style="left:935px;top:795.500px;width:73px;height:21px"></div>
<div class="t" style="top:798px;font-size:10.8px;letter-spacing:0.242px;color:#000;left:938px;">10,00</div>
<div class="t" style="top:798px;font-size:10.8px;letter-spacing:-1.000px;color:#000;left:1012px;">mm</div>
<div class="abs" style="left:719px;top:829px;width:12.600px;height:12.500px;background:#fdfdfd;border:1px solid #555;border-radius:2.500px"></div>
<div class="t" style="top:828px;font-size:10.8px;letter-spacing:0.429px;color:#000;left:735.5px;">Stylo Marque uniforme</div>
<svg class="abs" style="left:902px;top:827px" width="33" height="18" viewBox="902 827 33 18"><g fill="none" stroke="#2b2f36" stroke-width="1"><circle cx="914.200" cy="836.4" r="6.200"/><path d="M908 836.4H920.400"/><path d="M903.300 836.4H908" stroke-dasharray="1.600 1.200"/><path d="M912.800 833.6H915.600M912.800 839.1999999999999H915.600"/><path d="M926 829.200V838H932.200V829.200M926 838L929.100 842.800L932.200 838M927.800 839.800H930.400M921.500 842.700H928.500"/></g></svg>
<div class="inp" style="left:935px;top:827px;width:33px;height:18.300px"></div>
<div class="t" style="top:828px;font-size:10.8px;letter-spacing:-1.016px;color:#000;left:938px;">1</div>
<div class="btn" style="left:975.500px;top:826.400px;width:32.500px;height:18.500px"></div>
<div class="abs" style="left:981px;top:829px;width:1px;height:13px;background:#222"></div><div class="abs" style="left:989px;top:828.800px;width:16.300px;height:13.500px;background:#000;border-radius:2.500px"></div>
<svg class="abs" style="left:1094px;top:895px" width="30" height="30" viewBox="1094 895 30 30"><defs><pattern id="hz2" width="2.800" height="2.800" patternUnits="userSpaceOnUse" patternTransform="rotate(-45)"><rect width="2.800" height="1.400" fill="#2b2f36"/></pattern></defs><rect x="1096.500" y="905.500" width="5" height="15" fill="url(#hz2)"/><rect x="1101.500" y="916.200" width="9.300" height="4.200" fill="url(#hz2)"/><g fill="none" stroke="#2b2f36" stroke-width="1.1"><path d="M1096.500 905.500H1101.500V916.200H1110.800M1096.500 905.200V923M1096.500 920.500H1110.800M1101.500 920.500V923M1101.700 913.500H1110.800M1098.700 897V905.500"/><path d="M1096.500 897.300V904M1101.500 897.300V904" stroke-dasharray="2.200 1.300"/><path d="M1112 913.600H1115.200M1112 916.300H1115.200"/></g><path d="M1105 910.300H1110L1107.500 912.600Z" fill="#2b2f36"/><g fill="none" stroke="#2b2f36" stroke-width="1.1"><path d="M1118.500 908V922M1116.200 909.800L1118.500 912L1120.800 909.800M1116.200 920.200L1118.500 918L1120.800 920.200M1116 912H1121M1116 918H1121" stroke-width="1.150"/></g></svg>
<div class="inp" style="left:1131px;top:900px;width:103px;height:21px"></div>
<div class="t" style="top:903px;font-size:10.8px;letter-spacing:-0.005px;color:#000;left:1135px;">0,00</div>
<div class="sec" style="top:929px"></div>
<svg class="abs" style="left:725px;top:935px" width="7" height="10" viewBox="0 0 7 10"><path d="M1.900 1.300V8.700L6.200 5Z" fill="#333"/></svg>
<svg class="abs" style="left:737px;top:930px" width="23" height="20" viewBox="737 930 23 20"><g fill="none" stroke="#2b2f36" stroke-width="1"><path d="M740.300 937.500V947.300M738.700 939L740.300 937L741.900 939M738.700 945.800L740.300 947.800L741.900 945.800"/><path d="M743.200 947.600L748 937.500H749.200L754 947.600M744.700 944.300H752.500"/><path d="M743 937.500h2" stroke-dasharray="1 1"/><path d="M752.200 932V938.800H758.400V932M752.200 938.800L755.300 943.500L758.400 938.800M754 940.300H756.600"/></g></svg>
<div class="t" style="top:932px;font-size:10.8px;letter-spacing:0.147px;color:#000;left:765px;font-weight:bold;">Style de texte de Marque</div>
<div class="sec" style="top:956px"></div>
<svg class="abs" style="left:725px;top:962px" width="7" height="10" viewBox="0 0 7 10"><path d="M1.900 1.300V8.700L6.200 5Z" fill="#333"/></svg>
<svg class="abs" style="left:739px;top:958px" width="21" height="18" viewBox="739 356 21 18"><g fill="none" stroke="#2b2f36" stroke-width="1.1"><rect x="740.500" y="357.700" width="10" height="10"/><path d="M742.300 359.500L748.700 365.900M748.700 359.500L742.300 365.900"/></g><path d="M752 359.800L753.700 357.500L755.400 359.800ZM752 361.200L753.700 363.400L755.400 361.200Z" fill="#2b2f36"/><path d="M743.200 368.800L740.600 370.500L743.200 372.200ZM744.800 368.800L747.400 370.500L744.800 372.200Z" fill="#2b2f36"/><rect x="748.700" y="364.500" width="9" height="7.800" rx="1" fill="#d9d9d9" stroke="#2b2f36" stroke-width="1.100"/><path d="M748.700 366.300H757.700" stroke="#2b2f36" stroke-width="1.200"/><path d="M750.300 368.300H751.300M752.500 368.300H756.200M750.300 370.300H751.300M752.500 370.300H756.200" stroke="#2b2f36" stroke-width="0.900"/></svg>
<div class="t" style="top:959px;font-size:10.8px;letter-spacing:0.103px;color:#000;left:765px;font-weight:bold;">Symbole et texte de marque</div>
<div class="sec" style="top:983px"></div>
<svg class="abs" style="left:725px;top:989px" width="7" height="10" viewBox="0 0 7 10"><path d="M1.900 1.300V8.700L6.200 5Z" fill="#333"/></svg>
<svg class="abs" style="left:742px;top:985px" width="15" height="18" viewBox="742 985 15 18"><g fill="none" stroke="#2b2f36" stroke-width="1.1"><rect x="743.500" y="986.500" width="11.300" height="14" rx="1.200"/><path d="M745.700 989.600H750.300M745.700 992H752.500M745.700 994.400H749.600M745.700 996.800H752.500M745.700 998.700H752.500" stroke-width="0.900"/></g></svg>
<div class="t" style="top:986px;font-size:10.8px;letter-spacing:-0.082px;color:#000;left:765px;font-weight:bold;">Classification et Propriétés</div>
<div class="abs" style="left:719px;top:1017px;width:515px;height:1px;background:#a8a8a8"></div>
<div class="btn" style="left:1046px;top:1030px;width:88px;height:21px"></div>
<div class="t" style="top:1033px;font-size:10.8px;letter-spacing:0.630px;color:#000;left:1069px;">Annuler</div>
<div class="btn" style="left:1146px;top:1030px;width:88px;height:21px;border-color:#2b5f86;border-width:1.500px"></div>
<div class="t" style="top:1033px;font-size:10.8px;letter-spacing:0.391px;color:#000;left:1182px;">OK</div>
<svg class="abs" style="left:1238px;top:1050px" width="12" height="12" viewBox="0 0 12 12"><g fill="#a8a8a8"><rect x="7.500" y="2" width="1.600" height="1.600"/><rect x="7.500" y="5.200" width="1.600" height="1.600"/><rect x="7.500" y="8.400" width="1.600" height="1.600"/><rect x="4.300" y="5.200" width="1.600" height="1.600"/><rect x="4.300" y="8.400" width="1.600" height="1.600"/><rect x="1.100" y="8.400" width="1.600" height="1.600"/></g></svg>

<!--BOTTOMMARKS--><svg class="abs" style="left:0;top:1060px" width="1252" height="3" viewBox="0 1060 1252 3"><g fill="#222"><rect x="483" y="1061.600" width="7" height="1.400"/><rect x="694" y="1061.800" width="8" height="1.200"/><rect x="740" y="1061.800" width="4" height="1.200"/><rect x="748" y="1061.800" width="10" height="1.200"/><rect x="808" y="1061.800" width="8" height="1.200"/><rect x="840" y="1061.800" width="5" height="1.200"/><rect x="848" y="1061.800" width="4" height="1.200"/><rect x="627" y="1061.800" width="3" height="1.200"/><rect x="1040" y="1061.800" width="6" height="1.200"/></g></svg>
<!--END-->
</body></html>
